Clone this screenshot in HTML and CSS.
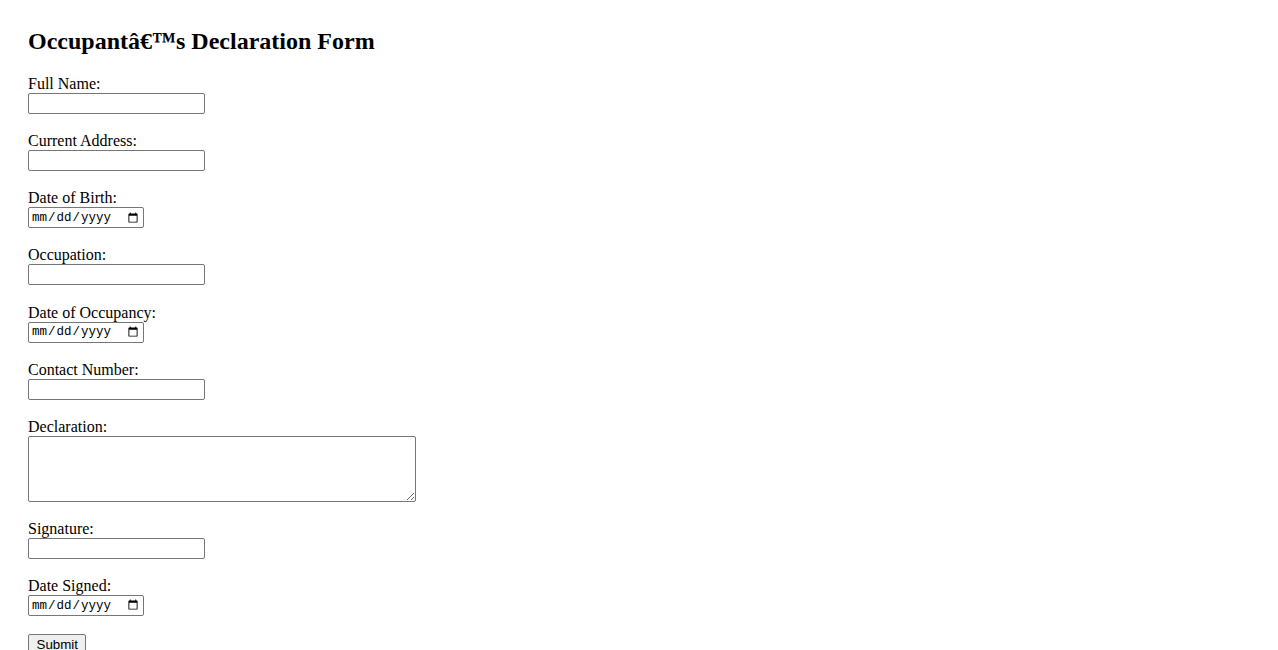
FILE: index.html
```html
<!DOCTYPE html>
<html>
<head>
<meta charset="utf-8">
<title>Occupant's Declaration Form</title>
<link rel="stylesheet" href="styles.css">
</head>
<body>
<div class="page">
  <h2 class="title">Occupantâ€™s Declaration Form</h2>
  <form class="form">
    <div class="group">
      <label class="label" for="name">Full Name:</label>
      <input class="text" type="text" id="name">
    </div>
    <div class="group">
      <label class="label" for="addr">Current Address:</label>
      <input class="text" type="text" id="addr">
    </div>
    <div class="group">
      <label class="label" for="dob">Date of Birth:</label>
      <input class="date" type="date" id="dob">
    </div>
    <div class="group">
      <label class="label" for="occ">Occupation:</label>
      <input class="text" type="text" id="occ">
    </div>
    <div class="group">
      <label class="label" for="doo">Date of Occupancy:</label>
      <input class="date" type="date" id="doo">
    </div>
    <div class="group">
      <label class="label" for="phone">Contact Number:</label>
      <input class="text" type="tel" id="phone">
    </div>
    <div class="group">
      <label class="label" for="decl">Declaration:</label>
      <textarea class="area" id="decl" rows="4"></textarea>
    </div>
    <div class="group">
      <label class="label" for="sig">Signature:</label>
      <input class="text" type="text" id="sig">
    </div>
    <div class="group">
      <label class="label" for="ds">Date Signed:</label>
      <input class="date" type="date" id="ds">
    </div>
    <button class="submit" type="submit">Submit</button>
  </form>
</div>
</body>
</html>
```
FILE: styles.css
```css
html, body {
  margin: 0;
  padding: 0;
  background: #fff;
}
body {
  font-family: "Liberation Serif", "Times New Roman", serif;
  font-size: 16px;
  color: #000;
}
.page {
  padding: 28px;
}
.title {
  margin: 0 0 20px;
  font-size: 24px;
  line-height: 27px;
  font-weight: bold;
}
.group {
  margin-bottom: 18.125px;
}
.label {
  display: block;
  line-height: 18px;
  height: 18px;
}
.text,
.date,
.area {
  display: block;
  box-sizing: border-box;
  margin: 0;
  border: 1px solid #767676;
  border-radius: 2px;
  background: #fff;
  color: #000;
}
.text {
  width: 177px;
  height: 21px;
  padding: 1px 2px;
  font-family: "Liberation Sans", Arial, sans-serif;
  font-size: 13.33px;
}
.date {
  width: 116px;
  height: 21px;
  padding: 1px 2px;
  font-family: "Liberation Mono", "Courier New", monospace;
  font-size: 12.5px;
}
.area {
  width: 388px;
  height: 66px;
  padding: 2px;
  font-family: "Liberation Mono", monospace;
  font-size: 13.33px;
  resize: both;
}
.submit {
  display: block;
  margin: 0;
  height: 21px;
  padding: 1px 7.5px;
  font-family: "Liberation Sans", Arial, sans-serif;
  font-size: 13.33px;
  color: #000;
  background: #efefef;
  border: 1px solid #767676;
  border-radius: 2px;
}
```
